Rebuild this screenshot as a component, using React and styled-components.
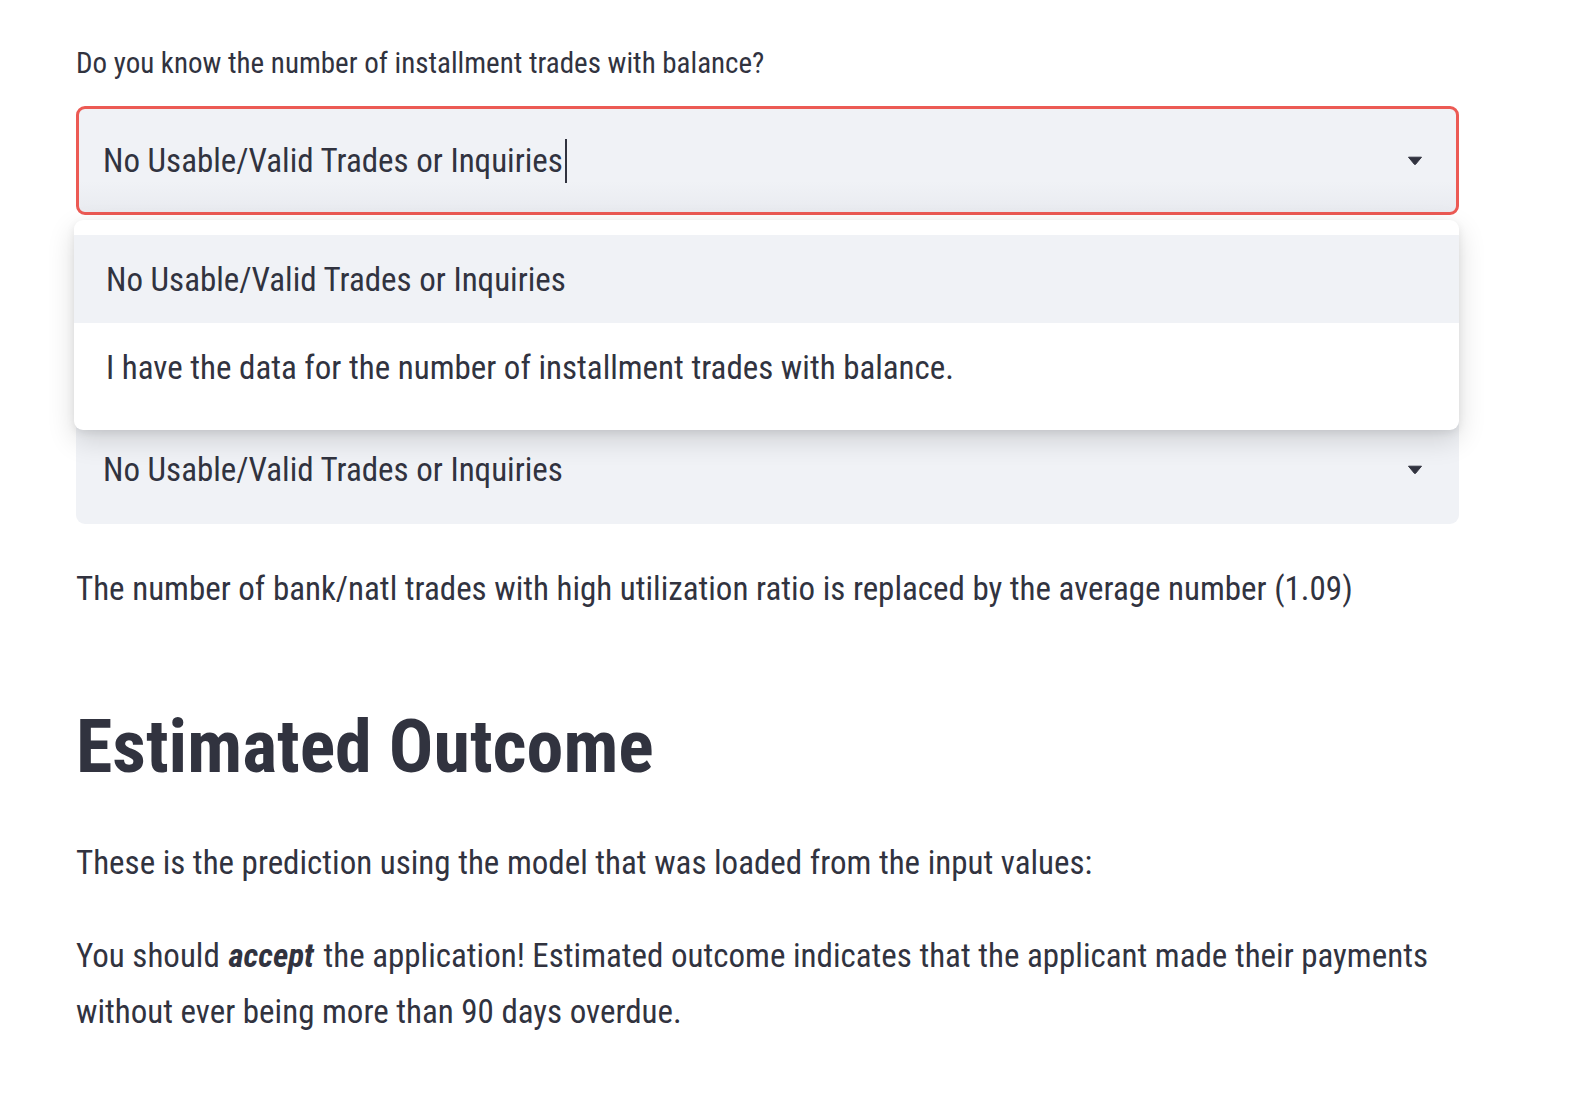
import React from "react";
import styled, { createGlobalStyle } from "styled-components";

const Global = createGlobalStyle`
  html, body { margin: 0; padding: 0; background: #ffffff; }
  body {
    font-family: "Roboto Condensed", "Roboto", "Liberation Sans", sans-serif;
    font-stretch: 88%;
    color: #31333f;
    -webkit-font-smoothing: antialiased;
  }
`;

const Page = styled.main`
  width: 1383px;
  padding: 40px 0 60px 76px;
  display: flex;
  flex-direction: column;
`;

const Label = styled.label`
  display: block;
  font-size: 29px;
  line-height: 46px;
  margin-bottom: 20px;
`;

const Field = styled.div`
  position: relative;
  margin-top: ${(p) => p.$top || 0}px;
`;

const SelectBox = styled.div`
  box-sizing: border-box;
  height: 109px;
  border: 3px solid ${(p) => (p.$focused ? "#ec5a54" : "transparent")};
  border-radius: 9px;
  background: ${(p) =>
    p.$focused ? "linear-gradient(#f0f2f6 70%, #e9ebf0)" : "#f0f2f6"};
  display: flex;
  align-items: center;
  padding: 0 33px 0 24px;
  font-size: 33px;
`;

const Value = styled.span`
  flex: 1;
  display: flex;
  align-items: center;
`;

const Caret = styled.span`
  display: inline-block;
  width: 2px;
  height: 44px;
  background: #31333f;
  margin-left: 2px;
`;

const Menu = styled.ul`
  position: absolute;
  z-index: 2;
  top: calc(100% + 5px);
  left: -2px;
  right: 0;
  margin: 0;
  padding: 15px 0 19px;
  list-style: none;
  background: #ffffff;
  border-radius: 9px;
  box-shadow: 0 10px 28px rgba(0, 0, 0, 0.14), 0 3px 8px rgba(0, 0, 0, 0.08);
`;

const Option = styled.li`
  height: 88px;
  display: flex;
  align-items: center;
  padding-left: 32px;
  font-size: 33px;
  background: ${(p) => (p.$active ? "#f0f2f6" : "#ffffff")};
`;

const Para = styled.p`
  margin: ${(p) => p.$top || 0}px 0 0;
  font-size: 33px;
  line-height: 56px;
`;

const Emph = styled.em`
  font-weight: 700;
  font-style: italic;
  padding: 0 2px 0 1px;
`;

const Heading = styled.h2`
  margin: 82px 0 0;
  font-size: 74px;
  line-height: 95px;
  font-weight: 700;
  font-stretch: 87%;
`;

const Arrow = () => (
  <svg width="16" height="10" viewBox="0 0 16 10" aria-hidden="true">
    <path d="M1.5 1.2 H14.5 L8.6 8.3 Q8 9 7.4 8.3 Z" fill="#31333f" stroke="#31333f" strokeWidth="1" strokeLinejoin="round" />
  </svg>
);

export default function App() {
  return (
    <>
      <Global />
      <Page>
        <Label>Do you know the number of installment trades with balance?</Label>
        <Field>
          <SelectBox $focused>
            <Value>
              No Usable/Valid Trades or Inquiries
              <Caret />
            </Value>
            <Arrow />
          </SelectBox>
          <Menu role="listbox">
            <Option $active>No Usable/Valid Trades or Inquiries</Option>
            <Option>I have the data for the number of installment trades with balance.</Option>
          </Menu>
        </Field>
        <Field $top={200}>
          <SelectBox>
            <Value>No Usable/Valid Trades or Inquiries</Value>
            <Arrow />
          </SelectBox>
        </Field>
        <Para $top={37}>
          The number of bank/natl trades with high utilization ratio is replaced by the average number (1.09)
        </Para>
        <Heading>Estimated Outcome</Heading>
        <Para $top={41}>These is the prediction using the model that was loaded from the input values:</Para>
        <Para $top={37}>
          You should <Emph>accept</Emph> the application! Estimated outcome indicates that the applicant made their payments
          without ever being more than 90 days overdue.
        </Para>
      </Page>
    </>
  );
}
